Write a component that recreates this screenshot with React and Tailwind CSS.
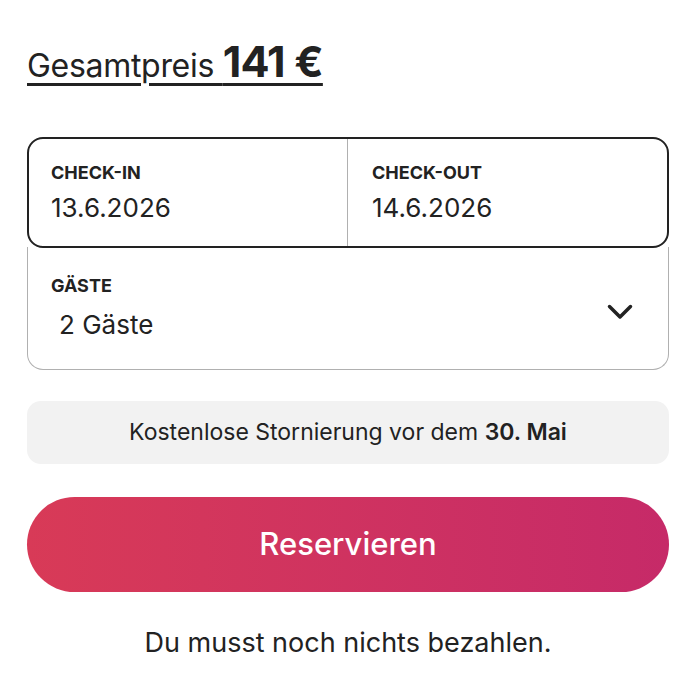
import React from 'react';

function Chevron() {
  return (
    <svg width="28" height="28" viewBox="0 0 32 32" fill="none" stroke="#222" strokeWidth="4" strokeLinecap="round" strokeLinejoin="round">
      <path d="M28 12 16 24 4 12" />
    </svg>
  );
}

export default function App() {
  return (
    <div className="min-h-[700px] w-[696px] bg-white px-[27px] pt-[38px] text-[#222]" style={{ fontFamily: 'Inter, "Noto Sans", sans-serif' }}>
      {/* price */}
      <div className="flex items-baseline">
        <span className="text-[32px] leading-[46px] underline decoration-[3px] underline-offset-[6px] tracking-[-0.3px]">
          Gesamtpreis <span className="text-[43px] font-bold tracking-[-0.8px]">141 €</span>
        </span>
      </div>

      {/* booking box */}
      <div className="mt-[48px]">
        <div className="grid h-[111px] grid-cols-2 rounded-[16px] border-2 border-[#222]">
          <div className="border-r border-[#b0b0b0] pl-[22px] pt-[23px]">
            <div className="text-[18px] font-bold leading-[22px]">CHECK-IN</div>
            <div className="mt-[9px] text-[26px] leading-[30px]">13.6.2026</div>
          </div>
          <div className="pl-[24px] pt-[23px]">
            <div className="text-[18px] font-bold leading-[22px]">CHECK-OUT</div>
            <div className="mt-[9px] text-[26px] leading-[30px]">14.6.2026</div>
          </div>
        </div>
        <div className="-mt-[1px] flex h-[123px] items-start justify-between rounded-b-[16px] border border-t-0 border-[#b0b0b0] pl-[23px] pr-[34px] pt-[28px]">
          <div>
            <div className="text-[18px] font-bold leading-[22px]">GÄSTE</div>
            <div className="mt-[12px] pl-[8px] text-[26px] leading-[32px]">2 Gäste</div>
          </div>
          <div className="mt-[21px]">
            <Chevron />
          </div>
        </div>
      </div>

      {/* cancellation */}
      <div className="mt-[31px] flex h-[63px] items-center justify-center rounded-[14px] bg-[#f2f2f2] text-[23px]">
        <span>
          Kostenlose Stornierung vor dem <span className="font-semibold">30. Mai</span>
        </span>
      </div>

      {/* button */}
      <button className="mt-[33px] flex h-[95px] w-full items-center justify-center rounded-full bg-gradient-to-r from-[#d83a57] to-[#c62a68] text-[31px] font-medium text-white">
        Reservieren
      </button>

      <div className="mt-[31px] text-center text-[27px]">Du musst noch nichts bezahlen.</div>
    </div>
  );
}
